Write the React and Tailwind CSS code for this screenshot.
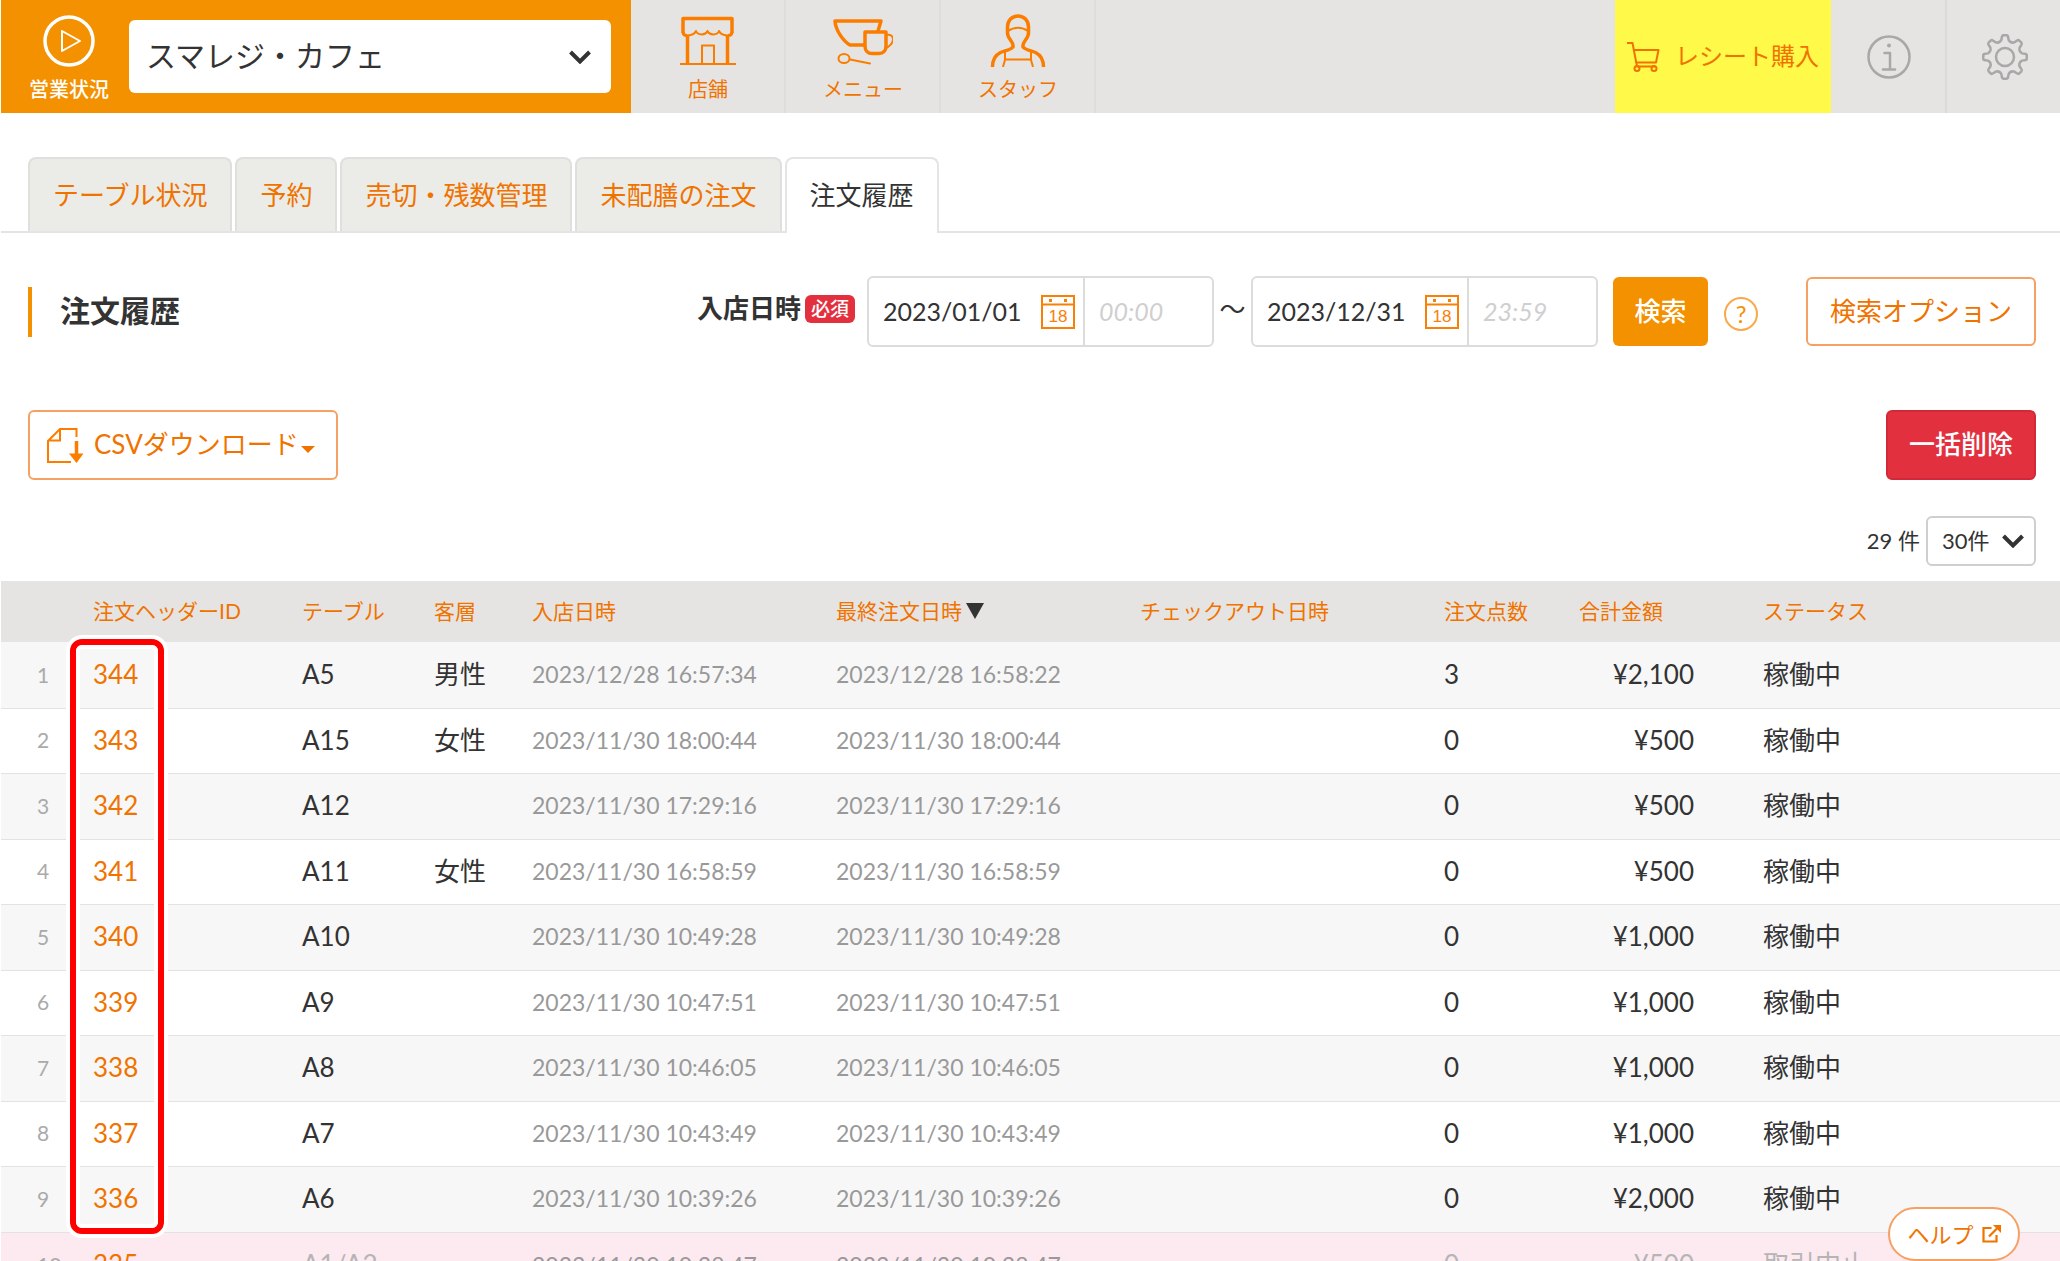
import { useState } from 'react';

const NAV_ITEMS = [
  { label: '店舗', Icon: ShopIcon },
  { label: 'メニュー', Icon: MenuIcon },
  { label: 'スタッフ', Icon: StaffIcon },
];

const TABS = ['テーブル状況', '予約', '売切・残数管理', '未配膳の注文', '注文履歴'];

const ORDERS = [
  { id: 344, table: 'A5', guest: '男性', entered: '2023/12/28 16:57:34', lastOrder: '2023/12/28 16:58:22', count: 3, total: 2100 },
  { id: 343, table: 'A15', guest: '女性', entered: '2023/11/30 18:00:44', lastOrder: '2023/11/30 18:00:44', count: 0, total: 500 },
  { id: 342, table: 'A12', guest: '', entered: '2023/11/30 17:29:16', lastOrder: '2023/11/30 17:29:16', count: 0, total: 500 },
  { id: 341, table: 'A11', guest: '女性', entered: '2023/11/30 16:58:59', lastOrder: '2023/11/30 16:58:59', count: 0, total: 500 },
  { id: 340, table: 'A10', guest: '', entered: '2023/11/30 10:49:28', lastOrder: '2023/11/30 10:49:28', count: 0, total: 1000 },
  { id: 339, table: 'A9', guest: '', entered: '2023/11/30 10:47:51', lastOrder: '2023/11/30 10:47:51', count: 0, total: 1000 },
  { id: 338, table: 'A8', guest: '', entered: '2023/11/30 10:46:05', lastOrder: '2023/11/30 10:46:05', count: 0, total: 1000 },
  { id: 337, table: 'A7', guest: '', entered: '2023/11/30 10:43:49', lastOrder: '2023/11/30 10:43:49', count: 0, total: 1000 },
  { id: 336, table: 'A6', guest: '', entered: '2023/11/30 10:39:26', lastOrder: '2023/11/30 10:39:26', count: 0, total: 2000 },
  { id: 335, table: 'A1/A2', guest: '', entered: '2023/11/30 10:38:47', lastOrder: '2023/11/30 10:38:47', count: 0, total: 500, cancelled: true },
];

function ShopIcon() {
  return (
    <svg className="h-[54px] w-[60px]" viewBox="0 0 60 54" fill="none" stroke="currentColor" strokeLinejoin="round">
      <path strokeWidth="3.5" d="M5 20V5.500h49V20M9.500 22v28M49.500 22v28" />
      <path strokeWidth="3" d="M5 19c0 2 1.500 3.500 4 3.500M54 19c0 2-1.500 3.500-4 3.500" />
      <path strokeWidth="2" d="M8 22.500c5 0 8.500-1 10-4.500 1.500 4.500 9.500 4.500 11.500 0 2 4.500 10 4.500 11.500 0 1.500 3.500 5 4.500 10 4.500" />
      <path strokeWidth="2" d="M2 51h56M24 50V32.500h12V50" />
    </svg>
  );
}

function MenuIcon() {
  return (
    <svg className="h-[54px] w-[60px]" viewBox="0 0 60 54" fill="none" stroke="currentColor" strokeLinejoin="round" strokeLinecap="round">
      <path strokeWidth="3.500" d="M31 32H17C10 28 2.500 17 2 8h46l-3 10" />
      <path strokeWidth="3.500" d="M32 19h21v14c0 5-3 7.500-7 7.500h-7c-4 0-7-3-7-7.500z" />
      <path strokeWidth="2" d="M54 22c3-1 6 1 6 4.500S56 34 53 35" />
      <ellipse cx="11" cy="45.500" rx="5.500" ry="4.500" strokeWidth="2" />
      <path strokeWidth="2" d="M17 46.500l20 4" />
    </svg>
  );
}

function StaffIcon() {
  return (
    <svg className="h-[54px] w-[60px]" viewBox="0 0 60 54" fill="none" stroke="currentColor" strokeLinejoin="round">
      <path strokeWidth="3.500" d="M4.500 54c0-8 3-12 8-14.500 5-2 10-2.500 12.500-5.500.5-3-1-5-2.500-7s-3-4.500-3-7V14C19.500 7.500 24 3 30 3s10.500 4.500 10.500 11v6c0 2.500-1.500 5-3 7s-3 4-2.500 7c2.500 3 7.500 3.500 12.500 5.500 5 2.500 8 6.500 8 14.500" />
      <path strokeWidth="2" d="M20 18c6-4.500 14-4.500 20 0M17 39v7c0 3-1.500 5-2 8M43 39v7c0 3 1.500 5 2 8M17 46.500h26" />
    </svg>
  );
}

// Un diente cada 45 grados, con el valle curvo entre dos dientes
function gearPath() {
  const point = (radius, degrees) => {
    const angle = ((degrees - 90) * Math.PI) / 180;
    return `${(23 + radius * Math.cos(angle)).toFixed(2)} ${(23 + radius * Math.sin(angle)).toFixed(2)}`;
  };
  let d = '';
  for (let a = 0; a < 360; a += 45) {
    d += `${a === 0 ? 'M' : 'L'}${point(20, a - 9)}Q${point(21.8, a - 8)} ${point(21.8, a - 4)}`;
    d += `L${point(21.8, a + 4)}Q${point(21.8, a + 8)} ${point(20, a + 9)}`;
    d += `L${point(17.5, a + 12)}Q${point(14.5, a + 22.5)} ${point(17.5, a + 33)}`;
  }
  return `${d}Z`;
}

function CalendarIcon() {
  return (
    <svg className="h-[34px] w-[34px]" viewBox="0 0 34 34" fill="none">
      <path stroke="#f98006" strokeWidth="2" d="M1 1h32v32H1zM1 9.500h32" />
      <path fill="#f98006" d="M8 4h3v3H8zM23 4h3v3h-3z" />
      <text x="17" y="27" textAnchor="middle" fontSize="17" fontFamily="Liberation Sans, sans-serif" fill="#f98006">18</text>
    </svg>
  );
}

function Chevron({ className }) {
  return (
    <svg className={className} viewBox="0 0 22 14" fill="none" stroke="#333" strokeWidth="4">
      <path d="M1.500 2l9.500 9.500L20.500 2" />
    </svg>
  );
}

function DateTimeField({ name, date, placeholder }) {
  return (
    <div className="flex h-[71px] w-[347px] items-stretch overflow-hidden rounded-md border-2 border-[#dcdcdc] bg-white">
      <div className="flex w-[216px] items-center justify-between border-r-2 border-[#dcdcdc] pr-2 pl-3.5">
        <input
          type="text"
          aria-label={`${name}の日付`}
          defaultValue={date}
          className="w-[148px] bg-transparent text-[25px] outline-none"
        />
        <button type="button" aria-label={`${name}のカレンダー`}>
          <CalendarIcon />
        </button>
      </div>
      <input
        type="text"
        aria-label={`${name}の時刻`}
        placeholder={placeholder}
        className="min-w-0 flex-1 bg-transparent px-3.5 text-[25px] italic outline-none placeholder:text-[#cfcfcf]"
      />
    </div>
  );
}

function Header() {
  return (
    <header className="flex h-[113px] items-stretch bg-[#e6e4e2]">
      <div className="flex w-[630px] items-center bg-[#f39100] pr-5 pl-7">
        <a href="#status" className="flex h-full w-20 flex-col items-center pt-[15px] text-white">
          <svg className="h-[52px] w-[52px]" viewBox="0 0 52 52" fill="none" stroke="currentColor" strokeLinejoin="round">
            <circle cx="26" cy="26" r="24" strokeWidth="3.500" />
            <path strokeWidth="2" d="M19 16v20l18-10z" />
          </svg>
          <span className="mt-2 text-xl leading-7 font-medium whitespace-nowrap">営業状況</span>
        </a>
        <div className="relative ml-5 flex-1">
          <select
            aria-label="店舗の選択"
            className="h-[73px] w-full appearance-none rounded-md bg-white pb-1 pl-[17px] text-3xl text-[#333]"
          >
            <option>スマレジ・カフェ</option>
          </select>
          <Chevron className="pointer-events-none absolute top-1/2 right-5 h-3.5 w-[22px] -translate-y-1/2" />
        </div>
      </div>

      <nav className="flex text-[#fa7d00]">
        {NAV_ITEMS.map(({ label, Icon }) => (
          <a key={label} href="#nav" className="flex w-[155px] flex-col items-center border-r-2 border-[#dedddb] pt-[13px] pl-px">
            <Icon />
            <span className="mt-2 text-xl leading-7 text-[#f07300]">{label}</span>
          </a>
        ))}
      </nav>

      <div className="ml-auto flex">
        <a href="#receipt" className="flex w-[216px] items-center justify-between bg-[#fff949] pr-3 pl-3 text-[#f07300]">
          <svg className="h-8 w-[34px]" viewBox="0 0 34 32" fill="none" stroke="currentColor" strokeWidth="2" strokeLinejoin="round">
            <path d="M0 2h5.500L10 25.500h18.500M7 9h24.500L29 21.500H9.500" />
            <circle cx="10" cy="27.500" r="2.500" />
            <circle cx="27" cy="27.500" r="2.500" />
          </svg>
          <span className="pb-0.5 text-2xl">レシート購入</span>
        </a>
        <button type="button" aria-label="お知らせ" className="flex w-[116px] items-center justify-center border-r-2 border-[#dbdad8] pl-0.5 text-[#a8a8a8]">
          <svg className="h-11 w-11" viewBox="0 0 44 44" fill="none" stroke="currentColor" strokeWidth="2.500" strokeLinecap="round" strokeLinejoin="round">
            <circle cx="22" cy="22" r="20.500" />
            <path d="M17.500 18H23v16M16 34.500h12" />
            <circle cx="22" cy="10.500" r="1" fill="currentColor" strokeWidth="2" />
          </svg>
        </button>
        <button type="button" aria-label="設定" className="flex w-[113px] items-center justify-center pl-0.5 text-[#a8a8a8]">
          <svg className="h-[46px] w-[46px]" viewBox="0 0 46 46" fill="none" stroke="currentColor" strokeWidth="2.500" strokeLinejoin="round">
            <circle cx="23" cy="23" r="9" />
            <path d={gearPath()} />
          </svg>
        </button>
      </div>
    </header>
  );
}

function OrderTable() {
  return (
    <div className="relative mt-[15px]">
      <table className="w-full table-fixed border-collapse text-left">
        <colgroup>
          <col className="w-[80px]" />
          <col className="w-[209px]" />
          <col className="w-[132px]" />
          <col className="w-[98px]" />
          <col className="w-[304px]" />
          <col className="w-[304px]" />
          <col className="w-[304px]" />
          <col className="w-[135px]" />
          <col className="w-[184px]" />
          <col className="w-[309px]" />
        </colgroup>
        <thead>
          <tr className="h-[61px] bg-[#e6e4e2] text-[21px] text-[#f07300] [&>th]:pb-0.5 [&>th]:pl-3 [&>th]:font-normal">
            <th aria-label="番号"></th>
            <th>注文ヘッダーID</th>
            <th>テーブル</th>
            <th>客層</th>
            <th>入店日時</th>
            <th>
              <button type="button" className="flex items-center gap-1">
                最終注文日時
                <svg className="h-4 w-[18px]" viewBox="0 0 18 16" fill="#333">
                  <path d="M0 0h18L9 16z" />
                </svg>
              </button>
            </th>
            <th>チェックアウト日時</th>
            <th>注文点数</th>
            <th>合計金額</th>
            <th>ステータス</th>
          </tr>
        </thead>
        <tbody className="text-[26px]">
          {ORDERS.map((order, index) => (
            <tr
              key={order.id}
              className={
                order.cancelled
                  ? 'h-[65px] bg-[#fdeaf0] text-[#b5b5b5] [&>td]:pl-3'
                  : 'h-[65px] border-b border-[#e3e3e3] odd:h-[66px] odd:bg-[#f7f7f7] [&>td]:pb-px [&>td]:pl-3'
              }
            >
              <td className="text-[21px] text-[#aaa]">
                <span className="pl-6">{index + 1}</span>
              </td>
              <td>
                <a href="#order" className="text-[#f07300]">{order.id}</a>
              </td>
              <td>{order.table}</td>
              <td>{order.guest}</td>
              <td className="text-[23px] text-[#999]">{order.entered}</td>
              <td className="text-[23px] text-[#999]">{order.lastOrder}</td>
              <td></td>
              <td>{order.count}</td>
              <td className="pr-[57px] text-right">¥{order.total.toLocaleString('en-US')}</td>
              <td>{order.cancelled ? '取引中止' : '稼働中'}</td>
            </tr>
          ))}
        </tbody>
      </table>

      {/* IDの列を囲む赤い枠 */}
      <div className="pointer-events-none absolute top-[54px] left-[65px] rounded-2xl border-4 border-white">
        <div className="h-[595px] w-[94px] rounded-xl border-6 border-[#ff0000]">
          <div className="h-full rounded-md border-4 border-white"></div>
        </div>
      </div>
    </div>
  );
}

export default function App() {
  const [activeTab, setActiveTab] = useState('注文履歴');

  return (
    <div className="h-screen overflow-hidden bg-white pl-px font-[Lato,'Noto_Sans_CJK_JP',sans-serif] text-[#333]">
      <Header />

      {/* タブ */}
      <nav className="mt-11 flex h-[76px] gap-[3px] border-b-2 border-[#e4e4e4] pl-[27px] text-[26px]">
        {TABS.map((tab) => (
          <button
            key={tab}
            type="button"
            onClick={() => setActiveTab(tab)}
            className={
              tab === activeTab
                ? '-mb-0.5 rounded-t-lg border-2 border-b-0 border-[#e4e4e4] bg-white px-[23px] pb-0.5'
                : 'rounded-t-lg border-2 border-b-0 border-[#dfdfdd] bg-[#ebebe7] px-[23px] text-[#f07300]'
            }
          >
            {tab}
          </button>
        ))}
      </nav>

      <main>
        {/* 検索フォーム */}
        <form className="mt-[43px] flex items-center pr-6 pl-[27px]" onSubmit={(e) => e.preventDefault()}>
          <h1 className="mr-auto flex h-[50px] items-center border-l-4 border-[#f39100] pb-1 pl-7 text-3xl font-bold">注文履歴</h1>
          <div className="mr-3 flex items-center gap-1 pb-1.5">
            <span className="text-[26px] font-bold">入店日時</span>
            <span className="rounded-md bg-[#e3303f] px-1.5 text-[19px] leading-7 font-medium text-white">必須</span>
          </div>
          <DateTimeField name="開始" date="2023/01/01" placeholder="00:00" />
          <span className="w-[37px] pb-1 text-center text-[26px]">〜</span>
          <DateTimeField name="終了" date="2023/12/31" placeholder="23:59" />
          <button type="submit" className="ml-[15px] h-[69px] w-[95px] rounded-md bg-[#f39100] text-[26px] font-medium text-white">
            検索
          </button>
          <button type="button" aria-label="検索のヘルプ" className="mt-1 ml-4 h-[34px] w-[34px] rounded-full border-2 border-[#f9a94a] text-2xl leading-7 text-[#f39100]">
            ?
          </button>
          <button type="button" className="ml-12 h-[69px] w-[230px] rounded-md border-2 border-[#f6a063] text-[26px] text-[#f07300]">
            検索オプション
          </button>
        </form>

        <div className="mt-[63px] flex items-center justify-between pr-6 pl-[27px]">
          <button type="button" className="flex h-[70px] w-[310px] items-center rounded-md border-2 border-[#f6a063] pl-[17px] text-[26px] text-[#f07300]">
            <svg className="h-[35px] w-[37px]" viewBox="0 0 37 35" fill="none" stroke="#fa7d00" strokeWidth="2">
              <path d="M29.500 9V1H13L1 13v21h23M13 1v11.500H1" />
              <path strokeWidth="3.500" d="M29.500 13v13" />
              <path fill="#fa7d00" stroke="none" d="M22 25.500h14.500L29.500 35z" />
            </svg>
            <span className="mr-0.5 ml-2.5 pb-0.5">CSVダウンロード</span>
            <svg className="mt-2 h-[7px] w-3.5" viewBox="0 0 14 7" fill="#f07300">
              <path d="M0 0h14L7 7z" />
            </svg>
          </button>
          <button type="button" className="h-[70px] w-[150px] rounded-md border-2 border-[#d3283a] bg-[#e3303f] pb-0.5 text-[26px] font-medium text-white">
            一括削除
          </button>
        </div>

        <div className="mt-9 flex items-center justify-end gap-1.5 pr-6 text-[22px]">
          <label htmlFor="per-page" className="pb-0.5">29 件</label>
          <div className="relative">
            <select id="per-page" className="h-[50px] w-[110px] appearance-none rounded-md border-2 border-[#cfcfcf] bg-white pb-0.5 pl-3.5">
              <option>30件</option>
            </select>
            <Chevron className="pointer-events-none absolute top-1/2 right-3 h-3.5 w-[22px] -translate-y-1/2" />
          </div>
        </div>

        <OrderTable />
      </main>

      <a
        href="#help"
        className="fixed right-10 bottom-0 flex h-[54px] w-[132px] items-center justify-center gap-2 rounded-full border-2 border-[#f6a063] bg-white text-[22px] text-[#f07300]"
      >
        ヘルプ
        <svg className="h-[18px] w-[19px]" viewBox="0 0 19 18" fill="none" stroke="currentColor" strokeWidth="2.200">
          <path d="M9.500 3H1.500v13.500h13V10M7 11.500L15.500 3" />
          <path fill="currentColor" stroke="none" d="M11 0h8v8z" />
        </svg>
      </a>
    </div>
  );
}
